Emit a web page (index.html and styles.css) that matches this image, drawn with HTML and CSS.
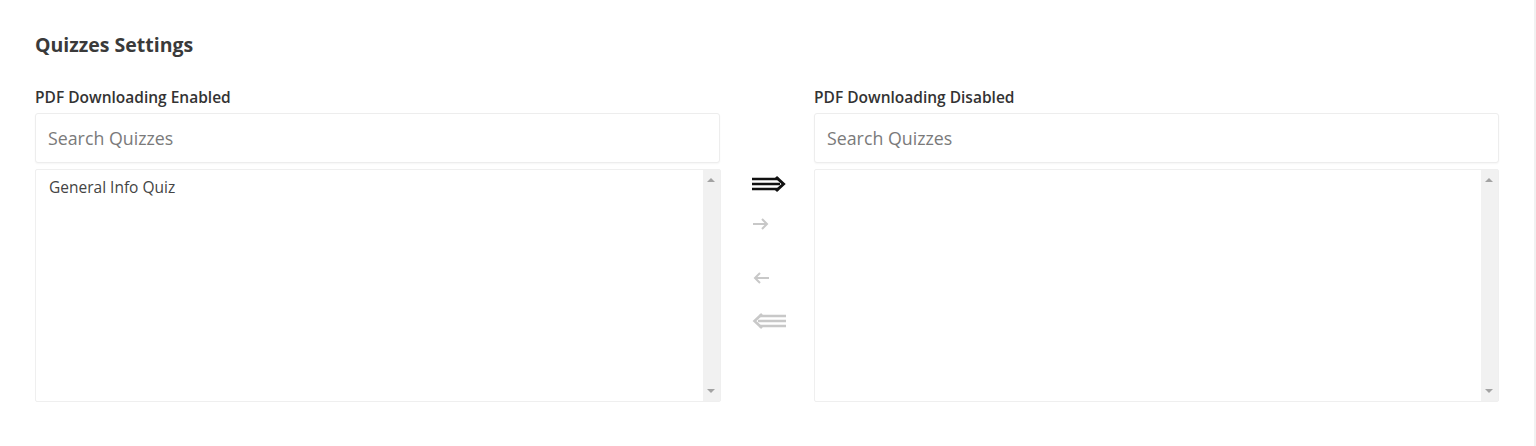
FILE: index.html
```html
<!DOCTYPE html>
<html lang="en">
<head>
    <meta charset="UTF-8">
    <meta name="viewport" content="width=device-width, initial-scale=1.0">
    <title>Quizzes Settings</title>
    <link rel="stylesheet" href="styles.css">
</head>
<body>
    <div class="page">
        <h2 class="section-title">Quizzes Settings</h2>

        <div class="transfer">
            <!-- Enabled list -->
            <label class="list-label label-left">PDF Downloading Enabled</label>
            <input class="search-input search-left" type="text" placeholder="Search Quizzes">
            <div class="list-box list-left">
                <ul class="list-items">
                    <li>General Info Quiz</li>
                </ul>
                <div class="scrollbar">
                    <span class="scroll-up"></span>
                    <span class="scroll-down"></span>
                </div>
            </div>

            <!-- Move buttons -->
            <div class="transfer-actions">
                <button class="move-btn active" title="Move all">
                    <svg width="34" height="18" viewBox="0 0 34 18">
                        <path d="M0 4h27M0 9h28M0 14h27" stroke="currentColor" stroke-width="2.6" fill="none"/>
                        <path d="M24 2l7.5 7-7.5 7" stroke="currentColor" stroke-width="3" fill="none"/>
                    </svg>
                </button>
                <button class="move-btn" title="Move selected">
                    <svg width="18" height="14" viewBox="0 0 18 14">
                        <path d="M1 7h14M10 2l5 5-5 5" stroke="currentColor" stroke-width="2" fill="none"/>
                    </svg>
                </button>
                <button class="move-btn group-gap" title="Remove selected">
                    <svg width="18" height="14" viewBox="0 0 18 14">
                        <path d="M17 7H3M8 2L3 7l5 5" stroke="currentColor" stroke-width="2" fill="none"/>
                    </svg>
                </button>
                <button class="move-btn last" title="Remove all">
                    <svg width="34" height="18" viewBox="0 0 34 18">
                        <path d="M7 4h27M6 9h28M7 14h27" stroke="currentColor" stroke-width="2.4" fill="none"/>
                        <path d="M10 2L2.5 9l7.5 7" stroke="currentColor" stroke-width="2.6" fill="none"/>
                    </svg>
                </button>
            </div>

            <!-- Disabled list -->
            <label class="list-label label-right">PDF Downloading Disabled</label>
            <input class="search-input search-right" type="text" placeholder="Search Quizzes">
            <div class="list-box list-right">
                <ul class="list-items"></ul>
                <div class="scrollbar">
                    <span class="scroll-up"></span>
                    <span class="scroll-down"></span>
                </div>
            </div>
        </div>
    </div>
</body>
</html>
```

FILE: styles.css
```css
* {
    box-sizing: border-box;
    margin: 0;
    padding: 0;
}

body {
    background-color: #fff;
    color: #333;
    font-family: 'Open Sans', 'Noto Sans', sans-serif;
}

.page {
    height: 446px;
    padding: 31px 37px 0 35px;
    border-right: 2px solid #f1f1f1;
}

.section-title {
    font-size: 19.5px;
    font-weight: 700;
    line-height: 28px;
    color: #3a3a3a;
    margin-bottom: 28px;
}

/* Dual list box */
.transfer {
    display: grid;
    grid-template-columns: 686px 93px 685px;
    grid-template-rows: 26px 50px 233px;
}

.list-label {
    font-size: 15.5px;
    font-weight: 600;
    color: #333;
    line-height: 20px;
}

.label-left { grid-column: 1; grid-row: 1; }
.label-right { grid-column: 3; grid-row: 1; }

.search-input {
    width: 100%;
    height: 50px;
    border: 1px solid #ededed;
    border-radius: 3px;
    padding: 0 12px;
    font-family: inherit;
    font-size: 17.8px;
    color: #333;
    box-shadow: 0 1px 2px rgba(0,0,0,0.04);
    outline: none;
}

.search-input::placeholder {
    color: #7a7a7a;
}

.search-left { grid-column: 1; grid-row: 2; width: 685px; }
.search-right { grid-column: 3; grid-row: 2; }

.list-box {
    display: flex;
    margin-top: 6px;
    height: 233px;
    border: 1px solid #efefef;
    border-radius: 2px;
    background-color: #fff;
}

.list-left { grid-column: 1; grid-row: 3; }
.list-right { grid-column: 3; grid-row: 3; }

.list-items {
    flex: 1;
    list-style: none;
    padding: 5px 0;
}

.list-items li {
    padding: 0 13px;
    font-size: 15.5px;
    line-height: 24px;
    color: #444;
}

.scrollbar {
    position: relative;
    width: 17px;
    background-color: #f1f1f1;
}

.scroll-up,
.scroll-down {
    position: absolute;
    left: 4px;
    width: 0;
    height: 0;
    border-left: 4px solid transparent;
    border-right: 4px solid transparent;
}

.scroll-up {
    top: 8px;
    border-bottom: 4px solid #a3a3a3;
}

.scroll-down {
    bottom: 8px;
    border-top: 4px solid #a3a3a3;
}

/* Arrow buttons between the lists */
.transfer-actions {
    grid-column: 2;
    grid-row: 3;
    display: flex;
    flex-direction: column;
    align-items: flex-start;
    padding: 6px 0 0 31px;
    gap: 10px;
}

.move-btn {
    display: flex;
    align-items: center;
    height: 30px;
    padding: 0;
    background: none;
    border: none;
    color: #c8c8c8;
    cursor: pointer;
}

.move-btn.active {
    color: #111;
}

.move-btn.group-gap {
    margin-top: 14px;
}

.move-btn.last {
    margin-top: 3px;
}
```
